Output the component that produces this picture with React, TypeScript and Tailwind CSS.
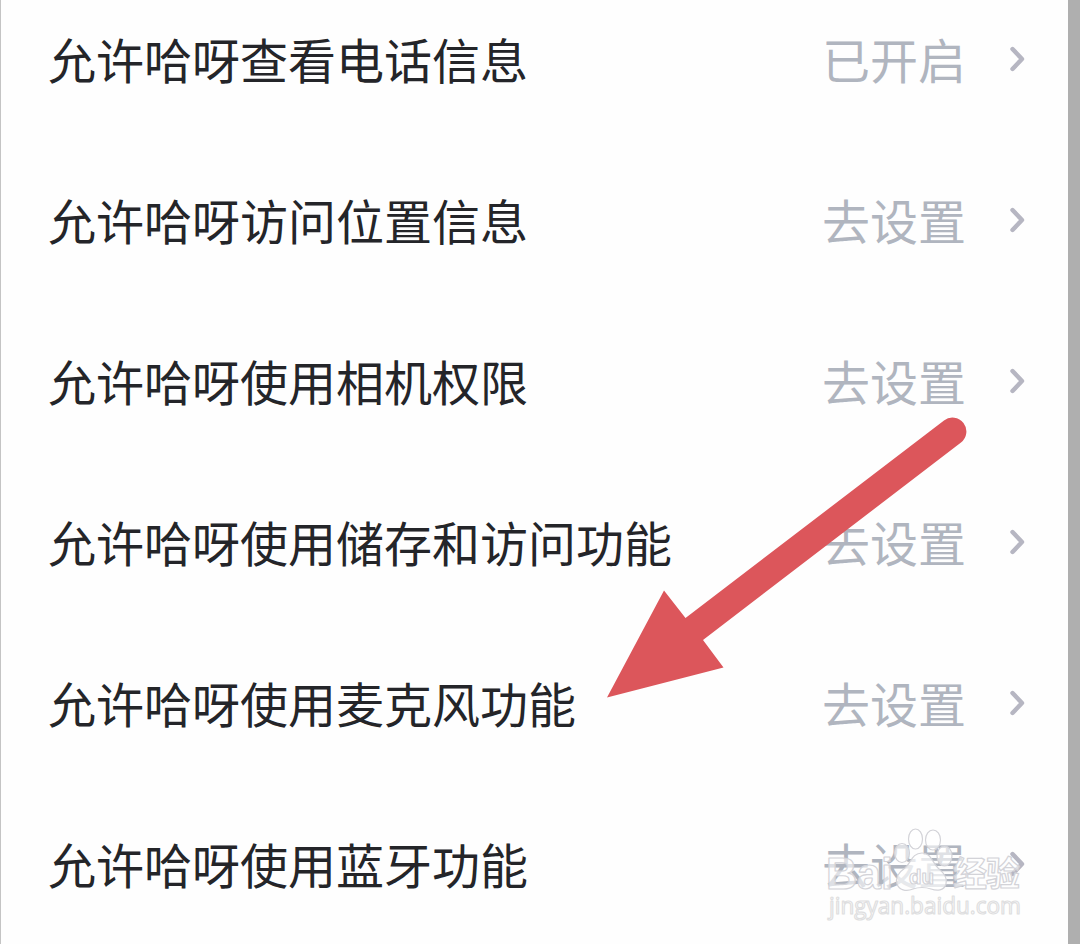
import React from "react";

const permissions = [
  { label: "允许哈呀查看电话信息", status: "已开启" },
  { label: "允许哈呀访问位置信息", status: "去设置" },
  { label: "允许哈呀使用相机权限", status: "去设置" },
  { label: "允许哈呀使用储存和访问功能", status: "去设置" },
  { label: "允许哈呀使用麦克风功能", status: "去设置" },
  { label: "允许哈呀使用蓝牙功能", status: "去设置" },
];

const Chevron = () => (
  <svg className="mt-px mr-[41px] h-7 w-[18px]" viewBox="0 0 18 28" fill="none">
    <path
      d="M3.5 4L13 14L3.5 24"
      stroke="#b6b6c2"
      strokeWidth="4.4"
      strokeLinecap="round"
      strokeLinejoin="round"
    />
  </svg>
);

const PermissionRow = ({ label, status }: { label: string; status: string }) => (
  <li className="flex h-24 items-center whitespace-nowrap">
    <span className="flex-1 text-[#242529]">{label}</span>
    <span className="mr-[43px] text-[#b0b5bf]">{status}</span>
    <Chevron />
  </li>
);

const Arrow = () => (
  <svg
    className="absolute top-[410px] left-[600px] h-[295px] w-[375px]"
    viewBox="600 410 375 295"
  >
    <path
      d="M607 697.5L664 590.5L685.5 618L944 420.5A13.6 13.6 0 0 1 961 442.5L703 640L723.5 667.5Z"
      fill="#dc565b"
    />
  </svg>
);

const Watermark = () => (
  <svg
    className="absolute top-[820px] left-[820px] h-[110px] w-[210px]"
    viewBox="820 820 210 110"
    fill="#fff"
    fillOpacity="0.6"
    stroke="#d3d3d8"
    strokeWidth="1.2"
    strokeLinejoin="round"
  >
    <g fontFamily="'Liberation Sans', sans-serif" fontWeight="700">
      <text x="826" y="888.5" fontSize="45" textLength="67" lengthAdjust="spacingAndGlyphs">
        Bai
      </text>
      <ellipse cx="902" cy="853" rx="7.5" ry="9.5" />
      <ellipse cx="915.5" cy="839" rx="7" ry="10" />
      <ellipse cx="933" cy="840" rx="7.5" ry="10" />
      <ellipse cx="944.5" cy="856" rx="7.5" ry="10" />
      <path
        d="M922 853C931 853 932 862 938 868C944 873 948 878 946 884C944 891 937 891 931 889C925 887 919 887 913 889C906 892 899 890 897 884C895 877 899 872 905 868C911 863 912 853 922 853Z"
        fillOpacity="0.7"
      />
      <text x="909" y="884" fontSize="21" textLength="25" lengthAdjust="spacingAndGlyphs">
        du
      </text>
    </g>
    <text
      x="953"
      y="886"
      fontSize="34"
      fontWeight="700"
      fontFamily="'Noto Sans CJK SC', sans-serif"
      textLength="67"
    >
      经验
    </text>
    <text
      x="829"
      y="914"
      fontSize="23"
      fontFamily="'Open Sans', sans-serif"
      textLength="192"
      lengthAdjust="spacingAndGlyphs"
      stroke="#dedee0"
      fillOpacity="1"
    >
      jingyan.baidu.com
    </text>
  </svg>
);

export default function App() {
  return (
    <div className="relative flex h-[944px] w-[1080px] overflow-hidden border-l border-[#c4c4c4] bg-[#fefefe] font-['Noto_Sans_CJK_SC',sans-serif]">
      <ul className="flex flex-1 flex-col gap-[65px] pt-[10px] pl-[47px] text-5xl leading-[96px]">
        {permissions.map((item) => (
          <PermissionRow key={item.label} {...item} />
        ))}
      </ul>
      <div className="w-3 bg-[#afafaf]" />
      <div className="absolute top-0 -left-px">
        <Arrow />
        <Watermark />
      </div>
    </div>
  );
}
